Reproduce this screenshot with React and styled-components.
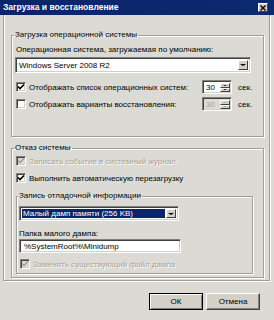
import React from 'react';
import styled, { createGlobalStyle, css } from 'styled-components';

const Global = createGlobalStyle`
  html, body { margin: 0; padding: 0; background: #dcdad4; }
  body { font-family: "Liberation Sans", Arial, sans-serif; font-size: 8px; color: #000; }
  #root { width: 274px; height: 320px; overflow: hidden; }
  * { box-sizing: border-box; }
`;

const Window = styled.div`
  width: 274px;
  height: 320px;
  display: flex;
  flex-direction: column;
  background: #dcdad4;
`;

const TitleBar = styled.div`
  height: 15px;
  flex: none;
  display: flex;
  align-items: center;
  justify-content: space-between;
  padding: 0 6px 0 3px;
  background: linear-gradient(90deg, #0a246a 0%, #0c2a70 100%);
  color: #fff;
  font-weight: bold;
  font-size: 8.5px;
  line-height: 15px;
`;

const CloseBtn = styled.div`
  width: 10px;
  height: 9px;
  background: #d4d0c8;
  border: 1px solid;
  border-color: #fff #404040 #404040 #fff;
  display: flex;
  align-items: center;
  justify-content: center;
`;

const Frame = styled.div`
  margin: 0 4px 0 3px;
  width: 267px;
  border: 1px solid #a09e98;
  border-top: none;
  box-shadow: inset 1px 0 0 #fff, 1px 1px 0 #fff;
  padding: 15px 5px 2px 7px;
  display: flex;
  flex-direction: column;
`;

const Group = styled.fieldset`
  margin: ${(p) => p.$mt || 0}px 0 0 ${(p) => p.$ml || 0}px;
  width: ${(p) => p.$w}px;
  padding: ${(p) => p.$pt}px ${(p) => p.$pr || 2}px ${(p) => p.$pb}px ${(p) => p.$pl || 3}px;
  border: 1px solid #a09e98;
  box-shadow: inset 1px 1px 0 #fff, 1px 1px 0 #fff;
  display: flex;
  flex-direction: column;
  min-width: 0;
`;

const Legend = styled.legend`
  padding: 0 1px;
  margin-left: -1px;
  line-height: 10px;
  height: 10px;
`;

const Label = styled.div`
  line-height: 10px;
  height: 10px;
  margin-top: ${(p) => p.$mt || 0}px;
  margin-left: ${(p) => p.$ml || 0}px;
  white-space: nowrap;
`;

const sunken = css`
  border: 1px solid;
  border-color: #808080 #fff #fff #808080;
  box-shadow: inset 1px 1px 0 #404040, inset -1px -1px 0 #d4d0c8;
`;

const Select = styled.div`
  ${sunken};
  width: ${(p) => p.$w}px;
  height: ${(p) => p.$h}px;
  margin-top: ${(p) => p.$mt || 0}px;
  background: #fff;
  display: flex;
  align-items: stretch;
  padding: 2px;
`;

const SelectValue = styled.div`
  flex: 1;
  display: flex;
  align-items: center;
  padding-left: 1px;
  white-space: nowrap;
  ${(p) =>
    p.$selected &&
    css`
      background: #0a246a;
      color: #fff;
    `}
`;

const ArrowBtn = styled.div`
  width: 10px;
  flex: none;
  background: #d4d0c8;
  border: 1px solid;
  border-color: #fff #404040 #404040 #fff;
  display: flex;
  align-items: center;
  justify-content: center;
  margin-left: 1px;
`;

const Tri = styled.span`
  width: 0;
  height: 0;
  border-left: ${(p) => p.$s || 3}px solid transparent;
  border-right: ${(p) => p.$s || 3}px solid transparent;
  ${(p) =>
    p.$up
      ? css`border-bottom: ${p.$s ? p.$s - 1 : 2}px solid ${p.$c || '#000'};`
      : css`border-top: ${p.$s ? p.$s - 1 : 2}px solid ${p.$c || '#000'};`}
`;

const Row = styled.div`
  display: flex;
  align-items: center;
  height: ${(p) => p.$h || 12}px;
  margin-top: ${(p) => p.$mt || 0}px;
  margin-left: ${(p) => p.$ml || 0}px;
`;

const CheckLabel = styled.label`
  flex: 1;
  display: flex;
  align-items: center;
  gap: 3px;
  white-space: nowrap;
  color: ${(p) => (p.$disabled ? '#a4a29c' : '#000')};
  text-shadow: ${(p) => (p.$disabled ? '1px 1px 0 #fff' : 'none')};
`;

const Box = styled.span`
  ${sunken};
  width: 10px;
  height: 10px;
  flex: none;
  background: ${(p) => (p.$disabled ? '#dcdad4' : '#fff')};
  display: flex;
  align-items: center;
  justify-content: center;
`;

const Spinner = styled.div`
  ${sunken};
  width: 30px;
  height: 14px;
  display: flex;
  padding: 2px 1px 1px 2px;
  background: ${(p) => (p.$disabled ? '#dcdad4' : '#fff')};
  color: ${(p) => (p.$disabled ? '#a4a29c' : '#000')};
`;

const SpinValue = styled.div`
  flex: 1;
  line-height: 9px;
  padding-left: 1px;
`;

const SpinBtns = styled.div`
  width: 10px;
  display: flex;
  flex-direction: column;
`;

const SpinBtn = styled.div`
  flex: 1;
  background: #d4d0c8;
  border: 1px solid;
  border-color: #fff #404040 #404040 #fff;
  display: flex;
  align-items: center;
  justify-content: center;
`;

const Unit = styled.span`
  width: 20px;
  margin-left: 6px;
  white-space: nowrap;
`;

const TextInput = styled.div`
  ${sunken};
  width: ${(p) => p.$w}px;
  height: 14px;
  margin-top: 0;
  background: #fff;
  padding: 0 4px;
  display: flex;
  align-items: center;
  white-space: nowrap;
`;

const Buttons = styled.div`
  display: flex;
  justify-content: flex-end;
  gap: 3px;
  padding-right: 14px;
  margin-top: 12px;
`;

const Button = styled.div`
  width: 54px;
  height: 17px;
  background: #d4d0c8;
  display: flex;
  align-items: center;
  justify-content: center;
  border: 1px solid;
  border-color: #fff #404040 #404040 #fff;
  box-shadow: inset -1px -1px 0 #808080;
  ${(p) =>
    p.$default &&
    css`
      border-color: #000;
      box-shadow: inset 1px 1px 0 #fff, inset -1px -1px 0 #808080;
    `}
`;

const Check = ({ disabled }) => (
  <svg width="8" height="8" viewBox="0 0 8 8">
    <path d="M1 3.5 L3 5.5 L7 1.5" fill="none" stroke={disabled ? '#a4a29c' : '#000'} strokeWidth="1.6" />
  </svg>
);

const Checkbox = ({ checked, disabled, children }) => (
  <CheckLabel $disabled={disabled}>
    <Box $disabled={disabled}>{checked && <Check disabled={disabled} />}</Box>
    {children}
  </CheckLabel>
);

const Spin = ({ disabled }) => (
  <Spinner $disabled={disabled}>
    <SpinValue>30</SpinValue>
    <SpinBtns>
      <SpinBtn>
        <Tri $up $s={2} $c={disabled ? '#a4a29c' : '#000'} />
      </SpinBtn>
      <SpinBtn>
        <Tri $s={2} $c={disabled ? '#a4a29c' : '#000'} />
      </SpinBtn>
    </SpinBtns>
  </Spinner>
);

export default function App() {
  return (
    <>
      <Global />
      <Window>
        <TitleBar>
          <span>Загрузка и восстановление</span>
          <CloseBtn>
            <svg width="6" height="6" viewBox="0 0 6 6">
              <path d="M0.5 0.5 L5.5 5.5 M5.5 0.5 L0.5 5.5" stroke="#000" strokeWidth="1.4" />
            </svg>
          </CloseBtn>
        </TitleBar>
        <Frame>
          <Group $w={253} $pt={5} $pb={25} $pr={5}>
            <Legend>Загрузка операционной системы</Legend>
            <Label $ml={1}>Операционная система, загружаемая по умолчанию:</Label>
            <Select $w={236} $h={16} $mt={2}>
              <SelectValue>Windows Server 2008 R2</SelectValue>
              <ArrowBtn>
                <Tri />
              </ArrowBtn>
            </Select>
            <Row $h={14} $mt={7} $ml={1}>
              <Checkbox checked>Отображать список операционных систем:</Checkbox>
              <Spin />
              <Unit>сек.</Unit>
            </Row>
            <Row $h={14} $mt={3} $ml={1}>
              <Checkbox>Отображать варианты восстановления:</Checkbox>
              <Spin disabled />
              <Unit>сек.</Unit>
            </Row>
          </Group>
          <Group $w={253} $mt={6} $pt={2} $pb={3} $pr={5}>
            <Legend>Отказ системы</Legend>
            <Row $ml={1}>
              <Checkbox checked disabled>
                Записать событие в системный журнал
              </Checkbox>
            </Row>
            <Row $mt={5} $ml={1}>
              <Checkbox checked>Выполнить автоматическую перезагрузку</Checkbox>
            </Row>
            <Group $w={237} $ml={1} $mt={7} $pt={5} $pb={3} $pl={2}>
              <Legend>Запись отладочной информации</Legend>
              <Select $w={160} $h={15}>
                <SelectValue $selected>Малый дамп памяти (256 KB)</SelectValue>
                <ArrowBtn>
                  <Tri />
                </ArrowBtn>
              </Select>
              <Label $mt={8}>Папка малого дампа:</Label>
              <TextInput $w={162}>%SystemRoot%\Minidump</TextInput>
              <Row $mt={5} $ml={1}>
                <Checkbox checked disabled>
                  Заменять существующий файл дампа
                </Checkbox>
              </Row>
            </Group>
          </Group>
        </Frame>
        <Buttons>
          <Button $default>ОК</Button>
          <Button>Отмена</Button>
        </Buttons>
      </Window>
    </>
  );
}
